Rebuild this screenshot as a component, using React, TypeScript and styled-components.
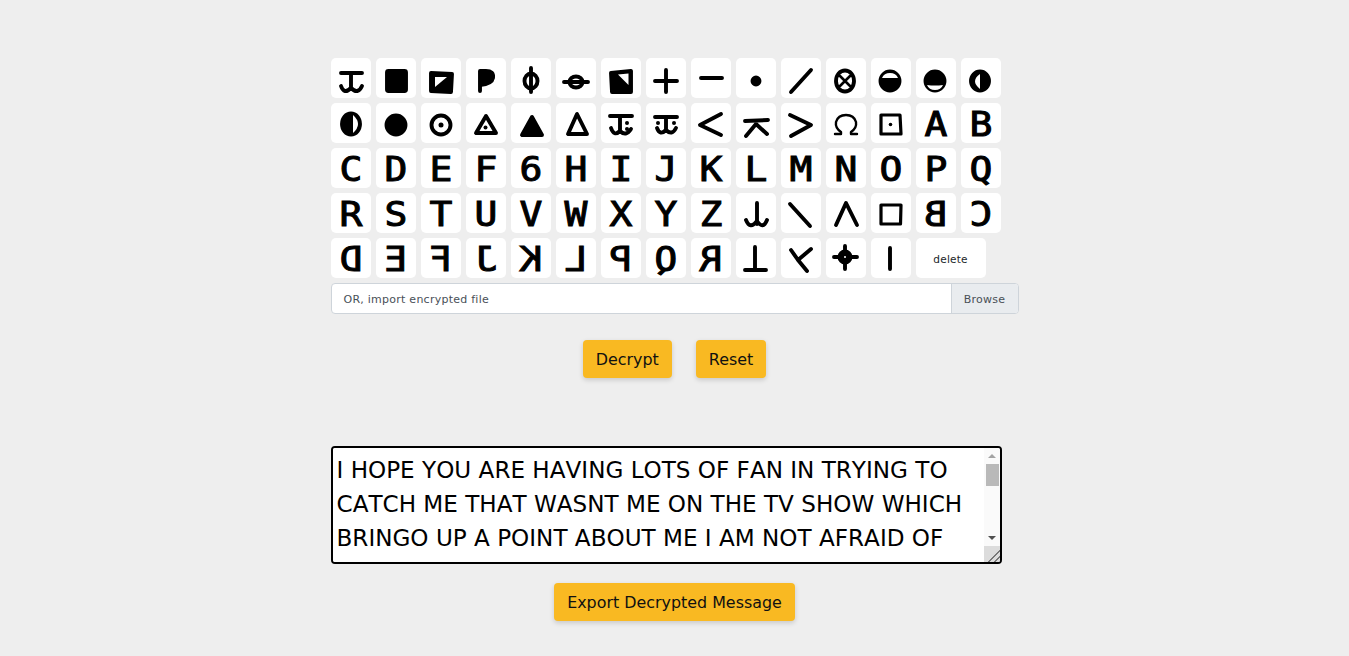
import React from "react";
import styled, { createGlobalStyle } from "styled-components";

const message =
  "I HOPE YOU ARE HAVING LOTS OF FAN IN TRYING TO CATCH ME THAT WASNT ME ON THE TV SHOW WHICH BRINGO UP A POINT ABOUT ME I AM NOT AFRAID OF THE GAS CHAMBER BECAUSE IT WILL SEND ME TO PARADICE ALL THE SOONER BECAUSE I NOW HAVE ENOUGH SLAVES TO WORK FOR ME WHERE EVERYONE ELSE HAS NOTHING WHEN THEY REACH PARADICE SO THEY ARE AFRAID OF DEATH I AM NOT AFRAID BECAUSE I KNOW THAT MY NEW LIFE WILL BE AN EASY ONE IN PARADICE DEATH";

const curlyT = "M10 15H31M20 15V31M10 28Q13 37 20 30Q27 37 31 28";

const symbols: Record<string, React.ReactNode> = {
  curl: <path d={curlyT} />,
  square: <rect x="11" y="13" width="19" height="20" rx="1.5" fill="#000" />,
  squareLow: (
    <>
      <path d="M10 15L31 16L30 34L10 33Z" fill="#000" />
      <path d="M14 19H26L14 29Z" fill="#fff" stroke="none" />
    </>
  ),
  fullP: <path d="M14 33V13H20Q28 13 27 20Q26 26 14 27Z" fill="#000" />,
  phi: (
    <>
      <ellipse cx="20" cy="23" rx="6.5" ry="7.5" />
      <path d="M20 10V34" />
    </>
  ),
  theta: (
    <>
      <ellipse cx="20" cy="24" rx="6.5" ry="5.5" />
      <path d="M8 24H32" />
    </>
  ),
  squareHigh: (
    <>
      <path d="M10 15L30 13V34L11 34Z" fill="#000" />
      <path d="M17 16.5L27.5 15.5V27Z" fill="#fff" stroke="none" />
    </>
  ),
  plus: <path d="M9 23H31M20 12V34" />,
  minus: <path d="M10 20H31" />,
  dot: <circle cx="20" cy="23" r="3.5" fill="#000" />,
  slash: <path d="M10 34L30 12" />,
  crossed: (
    <>
      <ellipse cx="19" cy="23" rx="9" ry="10.5" />
      <path d="M14 18L24 28M24 18L14 28" strokeWidth="2.6" />
    </>
  ),
  capTop: (
    <>
      <circle cx="19" cy="23" r="9.5" fill="#000" />
      <path d="M11 20Q13 15 19 15Q25 15 27 20Z" fill="#fff" stroke="none" />
    </>
  ),
  capBottom: (
    <>
      <circle cx="19" cy="23" r="9.5" fill="#000" />
      <path d="M11 27Q19 28 27 27Q25 32 19 32Q13 32 11 27Z" fill="#fff" stroke="none" />
    </>
  ),
  halfRight: (
    <>
      <ellipse cx="19" cy="23" rx="9" ry="9.5" fill="#000" />
      <path d="M19 16Q9 23 19 31Z" fill="#fff" stroke="none" />
    </>
  ),
  halfLeft: (
    <>
      <ellipse cx="20" cy="21" rx="9" ry="10.5" fill="#000" />
      <path d="M22 12Q32 21 22 30Z" fill="#fff" stroke="none" />
    </>
  ),
  disc: <circle cx="20" cy="22" r="9.5" fill="#000" />,
  ring: (
    <>
      <circle cx="20" cy="22" r="9.5" />
      <circle cx="20" cy="22" r="2.5" fill="#000" stroke="none" />
    </>
  ),
  triDot: (
    <>
      <path d="M20 13L10 30H30Z" />
      <circle cx="19.5" cy="24.5" r="2" fill="#000" stroke="none" />
    </>
  ),
  triFull: <path d="M21 14L11 32H31Z" fill="#000" />,
  tri: <path d="M21 11L12 31H31Z" />,
  curlDot: (
    <>
      <path d="M9 13H31M19 13V29M10 25Q13 34 19 28Q25 34 30 26" />
      <circle cx="26" cy="20" r="2" fill="#000" stroke="none" />
      <circle cx="26" cy="26" r="2" fill="#000" stroke="none" />
    </>
  ),
  curlDots: (
    <>
      <path d="M9 14H31M20 14V28M11 25Q14 33 20 27Q26 33 30 25" />
      <circle cx="12" cy="20" r="2" fill="#000" stroke="none" />
      <circle cx="28" cy="20" r="2" fill="#000" stroke="none" />
    </>
  ),
  less: <path d="M30 11L9 22L30 32" />,
  hat: <path d="M9 18L32 17M20 21L10 33M20 21L31 31" />,
  greater: <path d="M9 12L30 22L10 33" />,
  omega: (
    <path
      d="M9 31H15V29Q9 25 10 19Q12 12 20 12Q28 12 30 19Q31 25 25 29V31H31"
      strokeWidth="2.4"
    />
  ),
  squareDot: (
    <>
      <path d="M10 12H29L30 31H10Z" strokeWidth="3.2" />
      <circle cx="19.5" cy="21.5" r="1.8" fill="#000" stroke="none" />
    </>
  ),
  curlUp: <path d="M21 10V31M10 27Q14 37 21 28Q27 37 31 27" />,
  backslash: <path d="M9 11L29 33" />,
  lambda: <path d="M10 32L20 10L31 32" />,
  box: <path d="M10 12H30L29.5 31H10Z" strokeWidth="3.2" />,
  turnedT: <path d="M19 9V32M9 32H30" />,
  turnedY: <path d="M10 12L17 22L26 33M30 11L17 22" />,
  target: (
    <>
      <circle cx="19" cy="19" r="5.5" fill="#000" />
      <path d="M8 19H31M19 8V31" />
      <circle cx="19" cy="19" r="1" fill="#fff" stroke="none" />
    </>
  ),
  bar: <path d="M19 10V31" />,
};

type Cell = { symbol?: string; letter?: string; flip?: boolean };

const sym = (symbol: string): Cell => ({ symbol });
const letters = (text: string, flip = false): Cell[] =>
  text.split("").map((letter) => ({ letter, flip }));

const cells: Cell[] = [
  ...["curl", "square", "squareLow", "fullP", "phi", "theta", "squareHigh", "plus", "minus", "dot", "slash", "crossed", "capTop", "capBottom", "halfRight"].map(sym),
  ...["halfLeft", "disc", "ring", "triDot", "triFull", "tri", "curlDot", "curlDots", "less", "hat", "greater", "omega", "squareDot"].map(sym),
  ...letters("ABCDEF6HIJKLMNOPQRSTUVWXYZ"),
  ...["curlUp", "backslash", "lambda", "box"].map(sym),
  ...letters("BCDEFJKLPQR", true),
  ...["turnedT", "turnedY", "target", "bar"].map(sym),
];

const App = () => {
  return (
    <Main>
      <GlobalStyle />
      <Keyboard>
        {cells.map((cell, i) => (
          <Tile key={i}>
            {cell.symbol ? (
              <Symbol viewBox="0 0 40 40">{symbols[cell.symbol]}</Symbol>
            ) : (
              <Letter $flip={cell.flip}>{cell.letter}</Letter>
            )}
          </Tile>
        ))}
        <DeleteTile>delete</DeleteTile>
      </Keyboard>
      <FileInput>
        <FileLabel>OR, import encrypted file</FileLabel>
        <Browse>Browse</Browse>
      </FileInput>
      <Actions>
        <Button>Decrypt</Button>
        <Button>Reset</Button>
      </Actions>
      <OutputBox>
        <Output readOnly value={message} />
        <ScrollColumn>
          <ScrollArrow />
          <ScrollTrack>
            <ScrollThumb />
          </ScrollTrack>
          <ScrollArrow $down />
          <ResizeCorner />
        </ScrollColumn>
      </OutputBox>
      <ExportRow>
        <Button>Export Decrypted Message</Button>
      </ExportRow>
    </Main>
  );
};

export default App;

const GlobalStyle = createGlobalStyle`
  html, body {
    margin: 0;
    height: 100%;
    background: #eeeeee;
    font-family: "DejaVu Sans", Verdana, sans-serif;
  }
`;

const Main = styled.main`
  width: 688px;
  margin: 0 auto;
  padding-top: 58px;
  display: flex;
  flex-direction: column;
`;

const Keyboard = styled.div`
  display: flex;
  flex-wrap: wrap;
  gap: 5px;
`;

const Tile = styled.div`
  width: 40px;
  height: 40px;
  background: #fff;
  border-radius: 5px;
  display: flex;
  align-items: center;
  justify-content: center;
  overflow: hidden;
`;

const DeleteTile = styled(Tile)`
  width: 70px;
  padding-top: 2px;
  box-sizing: border-box;
  font-size: 10.5px;
  letter-spacing: 0.2px;
  color: #212529;
  cursor: pointer;
`;

const Symbol = styled.svg`
  width: 40px;
  height: 40px;
  display: block;
  fill: none;
  stroke: #000;
  stroke-width: 3.9;
  stroke-linecap: round;
  stroke-linejoin: round;
`;

const Letter = styled.span<{ $flip?: boolean }>`
  font-family: "DejaVu Sans Mono", monospace;
  font-size: 33px;
  line-height: 40px;
  padding-top: 4px;
  color: #000;
  -webkit-text-stroke: 1px #000;
  transform: scaleX(${(props) => (props.$flip ? -1.15 : 1.15)});
`;

const FileInput = styled.div`
  margin-top: 5px;
  height: 31px;
  box-sizing: border-box;
  padding-top: 0;
  display: flex;
  align-items: stretch;
  background: #fff;
  border: 1px solid #ced4da;
  border-radius: 4px;
  overflow: hidden;
  font-size: 11px;
  letter-spacing: 0.25px;
  color: #495057;
`;

const FileLabel = styled.div`
  flex: 1;
  display: flex;
  align-items: center;
  padding: 1px 0 0 12px;
`;

const Browse = styled.div`
  width: 66px;
  padding-top: 1px;
  display: flex;
  align-items: center;
  justify-content: center;
  background: #e9ecef;
  border-left: 1px solid #ced4da;
`;

const Actions = styled.div`
  margin-top: 26px;
  display: flex;
  justify-content: center;
  gap: 24px;
`;

const Button = styled.button`
  height: 38px;
  padding: 1px 13px 0;
  border: none;
  border-radius: 4px;
  background: #f9b922;
  color: #111;
  font-family: "DejaVu Sans", Verdana, sans-serif;
  font-size: 15.9px;
  box-shadow: 0 2px 5px rgba(0, 0, 0, 0.16);
  cursor: pointer;
`;

const OutputBox = styled.div`
  margin-top: 68px;
  width: 671px;
  height: 118px;
  box-sizing: border-box;
  display: flex;
  border: 2px solid #000;
  border-radius: 4px;
  background: #fff;
  overflow: hidden;
`;

const Output = styled.textarea`
  flex: 1;
  min-width: 0;
  box-sizing: border-box;
  padding: 5px 4px 0;
  border: none;
  background: #fff;
  color: #000;
  font-family: "DejaVu Sans", Verdana, sans-serif;
  font-size: 23.1px;
  font-kerning: none;
  line-height: 34px;
  outline: none;
  resize: none;
  overflow: hidden;
`;

const ScrollColumn = styled.div`
  width: 16px;
  display: flex;
  flex-direction: column;
  background: #fafafa;
`;

const ScrollArrow = styled.div<{ $down?: boolean }>`
  height: 16px;
  display: flex;
  align-items: center;
  justify-content: center;

  &::before {
    content: "";
    border-left: 4px solid transparent;
    border-right: 4px solid transparent;
    border-bottom: ${(props) => (props.$down ? "none" : "4px solid #a3a3a3")};
    border-top: ${(props) => (props.$down ? "4px solid #505050" : "none")};
  }
`;

const ScrollTrack = styled.div`
  flex: 1;
`;

const ScrollThumb = styled.div`
  height: 22px;
  margin: 0 1px 0 2px;
  background: #b9b9b9;
`;

const ResizeCorner = styled.div`
  height: 16px;
  background: linear-gradient(
    135deg,
    #dcdcdc 62%,
    #777 62%,
    #777 67%,
    #dcdcdc 67%,
    #dcdcdc 80%,
    #777 80%,
    #777 85%,
    #dcdcdc 85%
  );
`;

const ExportRow = styled.div`
  margin-top: 19px;
  display: flex;
  justify-content: center;
`;
